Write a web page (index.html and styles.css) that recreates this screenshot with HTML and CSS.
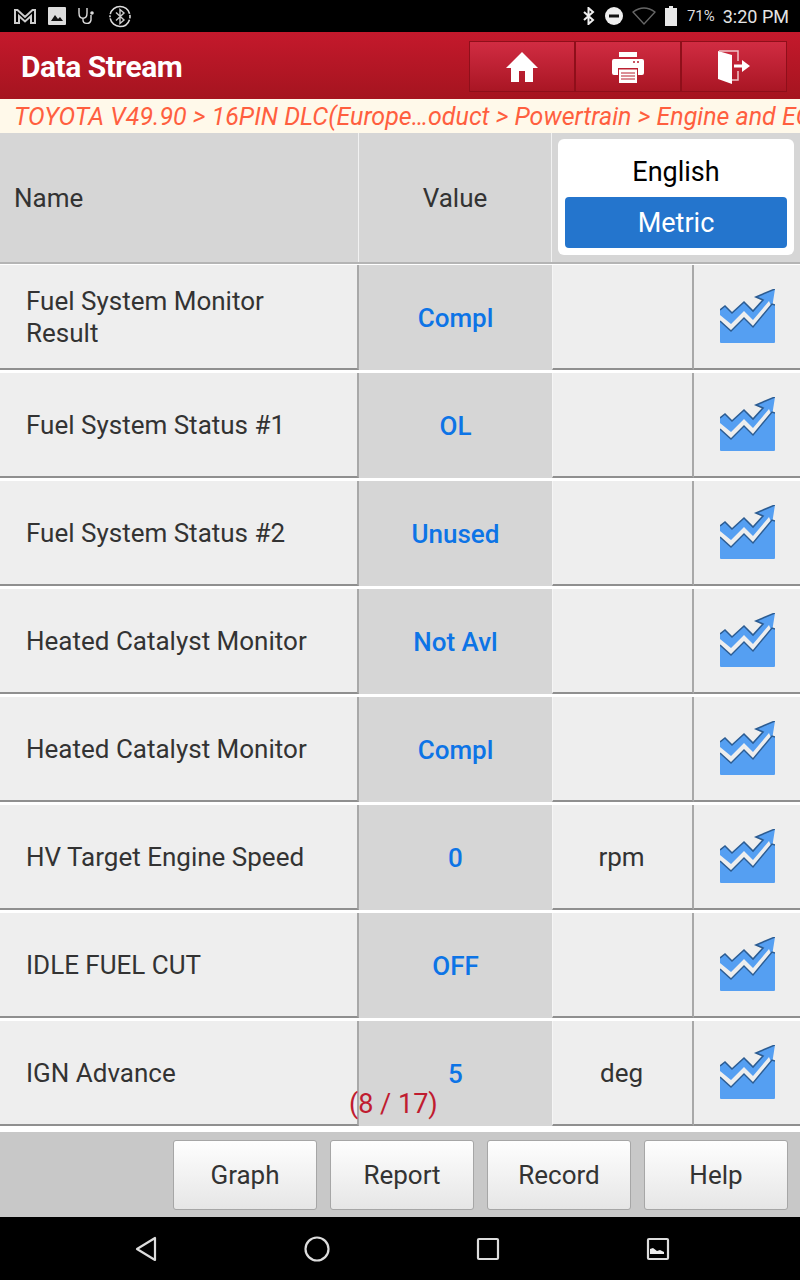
FILE: index.html
```html
<!DOCTYPE html>
<html lang="en">
  <head>
    <meta charset="UTF-8" />
    <title>Data Stream</title>
    <link rel="stylesheet" href="styles.css">
  </head>
  <body>
    <svg class="defs" width="0" height="0">
      <symbol id="trend" viewBox="0 0 55 55">
        <path d="M0 32 L0 53 Q0 54 1 54 L54 54 Q55 54 55 53 L55 16 L52 15 L33 38 L24 29 L11 42 Z" fill="#559ff2" />
        <path d="M0 21 L5 17 L12 24 L24 13 L33 22 L43 11 L36 8 L55 0 L52 19 L49 12 L33 31 L24 22 L11 35 L0 26 Z" fill="#559ff2" />
        <path d="M0 21 L5 17 L12 24 L24 13 L33 22 L43 11 L36 8 L55 0" fill="none" stroke="#2c5c92" stroke-width="1.6" />
        <path d="M0 32 L11 42 L24 29 L33 38 L52 15 L55 16" fill="none" stroke="#2c5c92" stroke-width="1.4" />
      </symbol>
    </svg>

    <div class="statusbar">
      <div class="status-left">
        <svg width="24" height="18" viewBox="0 0 24 18"><path d="M2 16V3h2.5L12 10l7.500-7H22v13h-4V9l-6 5.500L6 9v7Z" fill="none" stroke="#ccc" stroke-width="2" /></svg>
        <svg width="18" height="18" viewBox="0 0 18 18"><path d="M1 0h16a1 1 0 0 1 1 1v16a1 1 0 0 1-1 1H1a1 1 0 0 1-1-1V1a1 1 0 0 1 1-1Z" fill="#ddd" /><path d="M3 14l4-6 3 4 2-2 3 4Z" fill="#111" /></svg>
        <svg width="20" height="18" viewBox="0 0 20 18"><path d="M2 1v5c0 7 8 7 8 0V1M6 11v2c0 4 7 5 8 0V8" fill="none" stroke="#ddd" stroke-width="1.400" /><circle cx="15" cy="6" r="1.800" fill="#ddd" /></svg>
        <svg width="24" height="24" viewBox="0 0 24 24"><circle cx="12" cy="12.500" r="10" fill="none" stroke="#ddd" stroke-width="1.600" stroke-dasharray="2 1.200 26 1.200" /><path d="M8 8.500l8 7.500-4 3.500v-14l4 3.500-8 7.500" fill="none" stroke="#ccc" stroke-width="1.400" /></svg>
      </div>
      <div class="status-right">
        <svg width="14" height="18" viewBox="0 0 14 18"><path d="M2 5l9 8-4.500 4V1L11 5l-9 8" fill="none" stroke="#eee" stroke-width="2" /></svg>
        <svg width="18" height="18" viewBox="0 0 18 18"><circle cx="9" cy="9" r="9" fill="#eee" /><rect x="4" y="7.500" width="10" height="3" fill="#111" /></svg>
        <svg width="24" height="18" viewBox="0 0 24 18"><path d="M1 5Q12-3 23 5L12 17Z" fill="none" stroke="#666" stroke-width="1.300" /></svg>
        <svg width="12" height="20" viewBox="0 0 12 20"><path d="M4 0h4v2h4v18H0V2h4Z" fill="#e8e8e8" /></svg>
        <span class="battery">71%</span>
        <span class="clock">3:20 PM</span>
      </div>
    </div>

    <header class="titlebar">
      <h1>Data Stream</h1>
      <div class="toolbar">
        <button class="tool">
          <svg width="32" height="32" viewBox="0 0 32 32"><path d="M16 1L0 17h5v14h8V20h6v11h8V17h5Z" fill="#fff" /></svg>
        </button>
        <button class="tool">
          <svg width="32" height="32" viewBox="0 0 32 32"><path d="M7 1h18v5H7Z M2 8h28a2 2 0 0 1 2 2v12a2 2 0 0 1-2 2h-4v-7H6v7H2a2 2 0 0 1-2-2V10a2 2 0 0 1 2-2Z" fill="#fff" /><path d="M7 18.500h18V32H7Z" fill="#fff" /><path d="M9 22h14M9 25h14M9 28h14" stroke="#b81f30" stroke-width="1" /><path d="M21 11h2M25 11h2" stroke="#b81f30" stroke-width="1.500" /></svg>
        </button>
        <button class="tool">
          <svg width="34" height="34" viewBox="0 0 34 34"><path d="M1 1l14 4v29L1 29Z" fill="#fff" /><path d="M2 1h19v10M21 21v9h-6" fill="none" stroke="#f0c4c8" stroke-width="1.500" /><path d="M17 14.500h8V10l8 6-8 6v-4.500h-8Z" fill="#fff" /></svg>
        </button>
      </div>
    </header>

    <div class="crumb">TOYOTA V49.90 &gt; 16PIN DLC(Europe…oduct &gt; Powertrain &gt; Engine and ECT</div>

    <main class="table">
      <div class="head">
        <div class="head-name">Name</div>
        <div class="head-value">Value</div>
        <div class="head-unit">
          <div class="units">
            <div class="unit-opt">English</div>
            <div class="unit-opt unit-on">Metric</div>
          </div>
        </div>
      </div>

      <div class="row">
        <div class="cell name">Fuel System Monitor<br>Result</div>
        <div class="cell value">Compl</div>
        <div class="cell unit"></div>
        <div class="cell graph"><svg class="trend"><use href="#trend" /></svg></div>
      </div>
      <div class="row">
        <div class="cell name">Fuel System Status #1</div>
        <div class="cell value">OL</div>
        <div class="cell unit"></div>
        <div class="cell graph"><svg class="trend"><use href="#trend" /></svg></div>
      </div>
      <div class="row">
        <div class="cell name">Fuel System Status #2</div>
        <div class="cell value">Unused</div>
        <div class="cell unit"></div>
        <div class="cell graph"><svg class="trend"><use href="#trend" /></svg></div>
      </div>
      <div class="row">
        <div class="cell name">Heated Catalyst Monitor</div>
        <div class="cell value">Not Avl</div>
        <div class="cell unit"></div>
        <div class="cell graph"><svg class="trend"><use href="#trend" /></svg></div>
      </div>
      <div class="row">
        <div class="cell name">Heated Catalyst Monitor</div>
        <div class="cell value">Compl</div>
        <div class="cell unit"></div>
        <div class="cell graph"><svg class="trend"><use href="#trend" /></svg></div>
      </div>
      <div class="row">
        <div class="cell name">HV Target Engine Speed</div>
        <div class="cell value">0</div>
        <div class="cell unit">rpm</div>
        <div class="cell graph"><svg class="trend"><use href="#trend" /></svg></div>
      </div>
      <div class="row">
        <div class="cell name">IDLE FUEL CUT</div>
        <div class="cell value">OFF</div>
        <div class="cell unit"></div>
        <div class="cell graph"><svg class="trend"><use href="#trend" /></svg></div>
      </div>
      <div class="row">
        <div class="cell name">IGN Advance</div>
        <div class="cell value">5</div>
        <div class="cell unit">deg</div>
        <div class="cell graph"><svg class="trend"><use href="#trend" /></svg></div>
      </div>
      <div class="pager">(8 / 17)</div>
    </main>

    <footer class="actions">
      <button class="action">Graph</button>
      <button class="action">Report</button>
      <button class="action">Record</button>
      <button class="action">Help</button>
    </footer>

    <nav class="navbar">
      <svg width="24" height="26" viewBox="0 0 24 26"><path d="M21 2v22L3 13Z" fill="none" stroke="#ddd" stroke-width="2.200" stroke-linejoin="round" /></svg>
      <svg width="26" height="26" viewBox="0 0 26 26"><circle cx="13" cy="13" r="11.500" fill="none" stroke="#ddd" stroke-width="2.200" /></svg>
      <svg width="24" height="24" viewBox="0 0 24 24"><rect x="2" y="2" width="20" height="20" rx="1" fill="none" stroke="#ddd" stroke-width="2.200" /></svg>
      <svg width="24" height="24" viewBox="0 0 24 24"><rect x="2" y="2" width="20" height="20" rx="1" fill="none" stroke="#ddd" stroke-width="2.200" /><path d="M4 17v-5l3-1 4 3 3-1 4 2v2Z" fill="#eee" /></svg>
    </nav>
  </body>
</html>
```

FILE: styles.css
```css
* {
  box-sizing: border-box;
}
html,
body {
  margin: 0;
  padding: 0;
}
body {
  width: 800px;
  height: 1280px;
  background: #fff;
  font-family: Roboto, "Liberation Sans", sans-serif;
  overflow: hidden;
}
.defs {
  position: absolute;
}

.statusbar {
  height: 32px;
  background: #000;
  display: flex;
  justify-content: space-between;
  align-items: center;
  padding: 0 11px 0 13px;
}
.status-left,
.status-right {
  display: flex;
  align-items: center;
}
.status-left {
  gap: 11px;
}
.status-right {
  gap: 9px;
}
.battery {
  font-size: 15px;
  color: #ddd;
  margin-left: 1px;
}
.clock {
  font-size: 18px;
  color: #e4e4e4;
  margin-left: -1px;
}

.titlebar {
  height: 67px;
  background: linear-gradient(#c4192c, #a5141f);
  display: flex;
  justify-content: space-between;
  align-items: center;
  padding: 8px 13px 6px 21px;
}
.titlebar h1 {
  margin: 0;
  font-size: 30px;
  font-weight: 700;
  letter-spacing: -0.5px;
  color: #fff;
}
.toolbar {
  display: flex;
}
.tool {
  width: 106px;
  height: 51px;
  padding: 0;
  border: 1px solid #8f0f1a;
  background: linear-gradient(#d12c42, #a91624);
  display: flex;
  align-items: center;
  justify-content: center;
}

.crumb {
  height: 34px;
  background: #fff9ea;
  color: #ff5f3f;
  font-size: 25px;
  font-style: italic;
  line-height: 35px;
  padding-left: 14px;
  white-space: nowrap;
  overflow: hidden;
}

.table {
  position: relative;
}
.head {
  height: 131px;
  display: grid;
  grid-template-columns: 359px 193px 248px;
  background: #d6d6d6;
  border-bottom: 2px solid #b4b4b4;
  color: #333;
  font-size: 26px;
}
.head-name {
  display: flex;
  align-items: center;
  padding-left: 14px;
  border-right: 1px solid #f2f2f2;
}
.head-value {
  display: flex;
  align-items: center;
  justify-content: center;
  border-right: 1px solid #f2f2f2;
}
.head-unit {
  padding: 6px 6px 7px 6px;
}
.units {
  height: 116px;
  background: #fff;
  border-radius: 6px;
  padding: 7px 7px 7px 7px;
  display: flex;
  flex-direction: column;
}
.unit-opt {
  flex: 1;
  display: flex;
  align-items: center;
  justify-content: center;
  color: #000;
  font-size: 27px;
}
.unit-on {
  flex: 0 0 51px;
  background: #2475cd;
  border-radius: 4px;
  color: #fff;
}

.row {
  height: 108px;
  padding: 1px 0 2px;
  display: grid;
  grid-template-columns: 359px 193px 142px 106px;
  color: #333;
  font-size: 26px;
}
.cell {
  display: flex;
  align-items: center;
}
.name,
.unit,
.graph {
  background: #eee;
  border-bottom: 2px solid #8f8f8f;
}
.name {
  padding: 0 0 0 26px;
  border-right: 2px solid #a8a8a8;
  line-height: 32px;
  display: block;
  align-self: stretch;
}
.name {
  display: flex;
}
.value {
  justify-content: center;
  background: #d6d6d6;
  color: #0d74e6;
  font-weight: 500;
}
.unit {
  justify-content: center;
  border-right: 2px solid #a8a8a8;
  border-left: 1px solid #f5f5f5;
  padding-right: 2px;
}
.graph {
  justify-content: center;
  padding-right: 0;
}
.trend {
  width: 55px;
  height: 55px;
}
.pager {
  position: absolute;
  left: 349px;
  top: 955px;
  font-size: 27px;
  color: #c01c30;
  white-space: nowrap;
}

.actions {
  height: 85px;
  margin-top: 4px;
  background: #c8c8c8;
  display: flex;
  justify-content: flex-end;
  gap: 13px;
  padding: 8px 12px 7px 0;
}
.action {
  width: 144px;
  height: 70px;
  padding: 0;
  border: 1px solid #a6a6a6;
  border-radius: 3px;
  background: linear-gradient(#fefefe, #e6e6e6);
  color: #333;
  font-family: inherit;
  font-size: 26px;
}

.navbar {
  height: 64px;
  background: #000;
  display: flex;
  align-items: center;
  padding-left: 134px;
  gap: 146px;
}
```
